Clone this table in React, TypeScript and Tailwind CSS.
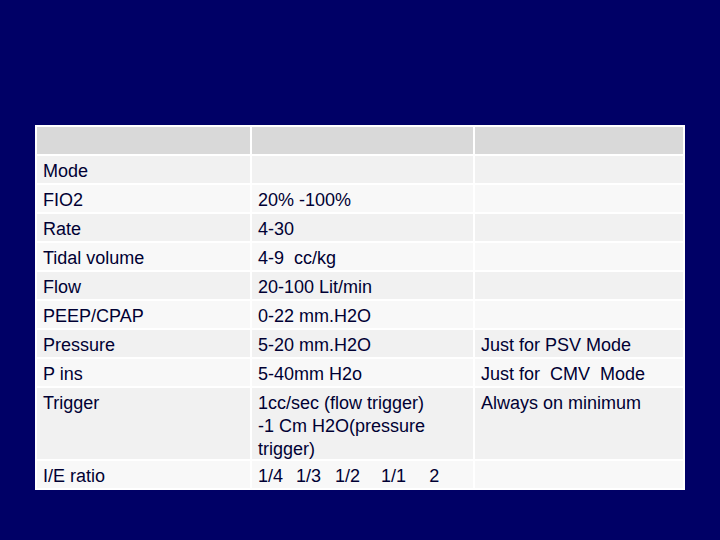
const ROWS: { cells: string[]; tall?: boolean }[] = [
  { cells: ["Mode", "", ""] },
  { cells: ["FIO2", "20% -100%", ""] },
  { cells: ["Rate", "4-30", ""] },
  { cells: ["Tidal volume", "4-9  cc/kg", ""] },
  { cells: ["Flow", "20-100 Lit/min", ""] },
  { cells: ["PEEP/CPAP", "0-22 mm.H2O", ""] },
  { cells: ["Pressure", "5-20 mm.H2O", "Just for PSV Mode"] },
  { cells: ["P ins", "5-40mm H2o", "Just for  CMV  Mode"] },
  {
    cells: ["Trigger", "1cc/sec (flow trigger)\n-1 Cm H2O(pressure\ntrigger)", "Always on minimum"],
    tall: true,
  },
];

const RATIOS = [
  { t: "1/4", ml: "ml-0" },
  { t: "1/3", ml: "ml-[13px]" },
  { t: "1/2", ml: "ml-[14px]" },
  { t: "1/1", ml: "ml-[21px]" },
  { t: "2", ml: "ml-[23px]" },
];

export default function App() {
  return (
    <div className="w-[720px] h-[540px] bg-[#000066] pt-[125px] pl-[35px] font-['Liberation_Sans',Arial,sans-serif] text-[18px] leading-[23px] text-[#000033]">
      <div className="w-[650px] bg-white p-[2px] grid grid-cols-[213px_221px_208px] gap-[2px]">
        <div className="h-[27px] bg-[#d9d9d9]" />
        <div className="h-[27px] bg-[#d9d9d9]" />
        <div className="h-[27px] bg-[#d9d9d9]" />
        {ROWS.map((row, i) =>
          row.cells.map((c, j) => (
            <div
              key={`${i}-${j}`}
              className={`${row.tall ? "h-[71px]" : "h-[27px]"} ${
                i % 2 === 0 ? "bg-[#f1f1f1]" : "bg-[#f8f8f8]"
              } pt-[4px] pl-[6px] whitespace-pre`}
            >
              {c}
            </div>
          ))
        )}
        <div className="h-[27px] bg-[#f8f8f8] pt-[4px] pl-[6px]">I/E ratio</div>
        <div className="h-[27px] bg-[#f8f8f8] pt-[4px] pl-[6px] flex">
          {RATIOS.map((r) => (
            <span key={r.t} className={r.ml}>
              {r.t}
            </span>
          ))}
        </div>
        <div className="h-[27px] bg-[#f8f8f8]" />
      </div>
    </div>
  );
}
